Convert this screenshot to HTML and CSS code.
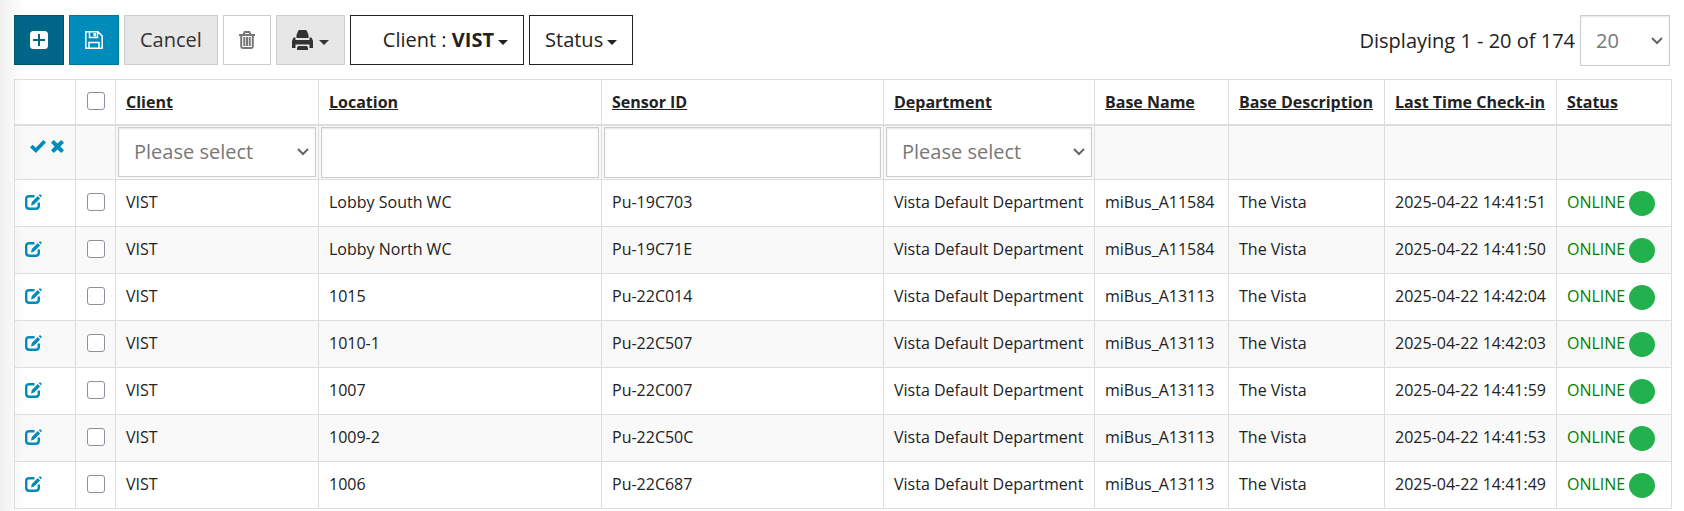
FILE: index.html
```html
<!DOCTYPE html>
<html lang="en">
<head>
<meta charset="utf-8">
<title>Sensors</title>
<link rel="stylesheet" href="styles.css">
</head>
<body>
<svg class="sprite" aria-hidden="true">
  <symbol id="i-plus" viewBox="0 0 18 18"><path fill="currentColor" fill-rule="evenodd" d="M3.500 0h11A3.500 3.500 0 0 1 18 3.500v11a3.500 3.500 0 0 1-3.500 3.500h-11A3.500 3.500 0 0 1 0 14.500v-11A3.500 3.500 0 0 1 3.500 0zM8 3v5H3v2h5v5h2v-5h5V8h-5V3z"/></symbol>
  <symbol id="i-save" viewBox="0 0 18 18"><path fill="none" stroke="currentColor" stroke-width="1.500" d="M.8 .8H13l4.200 4.200v12.200H.8zM4.500 1v5.500h8V1M4 17v-5.500h10V17"/><path fill="currentColor" d="M8.500 2h2.500v3.500H8.500z"/></symbol>
  <symbol id="i-trash" viewBox="0 0 16 18"><path fill="none" stroke="currentColor" stroke-width="2" d="M0 4h16M4.600 3.500l1-2.500h4.800l1 2.500"/><path fill="none" stroke="currentColor" stroke-width="2" d="M2.200 4v11.600q0 1.400 1.400 1.400h8.800q1.400 0 1.400-1.400V4M5.300 6v9M8 6v9M10.700 6v9"/></symbol>
  <symbol id="i-print" viewBox="0 0 22 20"><path fill="currentColor" d="M7.500 0h6q1 0 1.400 1L16.500 5v3h-12V5l1.600-4q.4-1 1.400-1zM1.500 7.500h2V10h14V7.500h2L21 11v7h-3.500v-3.500h-14V18H0v-7zM6 16h9l1 2v2H5v-2z"/></symbol>
  <symbol id="i-check" viewBox="0 0 16 13"><path fill="currentColor" d="M0 7.300L2.600 4.700l3.200 3.100L13.300 0 16 2.600 5.900 13z"/></symbol>
  <symbol id="i-x" viewBox="0 0 13 13"><path fill="currentColor" d="M2.800 0L6.500 3.600 10.200 0 13 2.800 9.400 6.500 13 10.200 10.200 13 6.500 9.400 2.800 13 0 10.200 3.600 6.500 0 2.800z"/></symbol>
  <symbol id="i-edit" viewBox="0 0 17 16"><path fill="none" stroke="currentColor" stroke-width="2.400" d="M9.500 2.200H4.200q-3 0-3 3v6.600q0 3 3 3h6.600q3 0 3-3V8.500"/><path fill="currentColor" d="M6 11.500l.8-3.400 6-6 2.300 2.300-6 6zM13.800 1.200L15 0l2 2-1.200 1.200z"/></symbol>
</svg>
<main class="page">
  <div class="toolbar">
    <div class="actions">
      <button class="btn btn-add" type="button" aria-label="Add"><svg width="18" height="18"><use href="#i-plus"/></svg></button>
      <button class="btn btn-save" type="button" aria-label="Save"><svg width="18" height="18"><use href="#i-save"/></svg></button>
      <button class="btn btn-grey" type="button">Cancel</button>
      <button class="btn btn-trash" type="button" aria-label="Delete"><svg width="16" height="18"><use href="#i-trash"/></svg></button>
      <button class="btn btn-grey btn-print" type="button" aria-label="Print"><svg width="22" height="20"><use href="#i-print"/></svg><span class="caret"></span></button>
      <button class="btn btn-filter btn-client" type="button"><span>Client : <b>VIST</b></span><span class="caret"></span></button>
      <button class="btn btn-filter" type="button"><span>Status</span><span class="caret"></span></button>
    </div>
    <div class="pager">
      <label for="page-size">Displaying 1 - 20 of 174</label>
      <select class="field page-size" id="page-size"><option>20</option></select>
    </div>
  </div>
  <table class="grid">
    <colgroup><col class="c-tools"><col class="c-check"><col class="c-client"><col class="c-location"><col class="c-sensor"><col class="c-dept"><col class="c-base"><col class="c-desc"><col class="c-time"><col class="c-status"></colgroup>
    <thead>
      <tr>
        <th></th><th class="check"><input type="checkbox" aria-label="Select all"></th>
        <th><a href="#">Client</a></th><th><a href="#">Location</a></th><th><a href="#">Sensor ID</a></th><th><a href="#">Department</a></th><th><a href="#">Base Name</a></th><th><a href="#">Base Description</a></th><th><a href="#">Last Time Check-in</a></th><th><a href="#">Status</a></th>
      </tr>
    </thead>
    <tbody id="rows">
      <tr class="filters">
        <td><div class="filter-actions"><a href="#" aria-label="Apply"><svg width="16" height="13"><use href="#i-check"/></svg></a><a href="#" aria-label="Clear"><svg width="13" height="13"><use href="#i-x"/></svg></a></div></td>
        <td></td>
        <td class="cell-field"><select class="field" aria-label="Client"><option>Please select</option></select></td>
        <td class="cell-field"><input class="field" type="text" aria-label="Location"></td>
        <td class="cell-field"><input class="field" type="text" aria-label="Sensor ID"></td>
        <td class="cell-field"><select class="field" aria-label="Department"><option>Please select</option></select></td>
        <td></td><td></td><td></td><td></td>
      </tr>
    </tbody>
  </table>
</main>
<script src="rows.js"></script>
</body>
</html>
```
FILE: styles.css
```css
* { box-sizing: border-box; }
body {
  margin: 0;
  background: linear-gradient(to right, #f0f0f0, #fff 24px);
  color: #222;
  font: 16px/24px "Open Sans", sans-serif;
}
.sprite { display: none; }
.page { padding: 15px 12px 0 14px; overflow: hidden; }
.toolbar { display: flex; justify-content: space-between; height: 64px; padding-right: 2px; }
.actions { display: flex; align-items: flex-start; gap: 5px; }
.btn {
  display: flex; align-items: center; justify-content: center;
  height: 50px; padding: 0 15px;
  border: 1px solid #ccc; background: #fff; color: #333;
  font: 20px/28px "Open Sans", sans-serif;
}
.btn-add { background: #068; border-color: #005270; color: #fff; }
.btn-save { background: #008cba; border-color: #0079a1; color: #fff; }
.btn-grey { background: #e7e7e7; }
.btn-trash { color: #777; }
.btn-print { gap: 5px; }
.btn-filter { border-color: #222; color: #222; gap: 4px; }
.btn-client { padding-left: 32px; }
.caret { border: 5px solid transparent; border-top-color: currentColor; border-bottom: 0; margin-top: 5px; }
.pager { display: flex; align-items: flex-start; gap: 5px; font-size: 20px; line-height: 52px; }
.field {
  display: block; width: 100%; height: 51px; margin: 0; padding: 0 15px;
  border: 1px solid #ccc; border-radius: 0; background-color: #fff;
  box-shadow: inset 0 1px 2px rgba(0, 0, 0, .1);
  color: #777; font: 20px/28px "Open Sans", sans-serif;
}
select.field {
  appearance: none; height: 50px;
  background-image: url("data:image/svg+xml,%3Csvg xmlns='http://www.w3.org/2000/svg' width='12' height='8'%3E%3Cpath d='M1 1l5 5 5-5' fill='none' stroke='%23666' stroke-width='2'/%3E%3C/svg%3E");
  background-repeat: no-repeat; background-position: right 6px center;
}
select.page-size { width: 90px; height: 51px; }
.grid { width: 100%; table-layout: fixed; border-collapse: collapse; }
.c-tools { width: 61px; } .c-check { width: 40px; } .c-client { width: 203px; }
.c-location { width: 283px; } .c-sensor { width: 282px; } .c-dept { width: 211px; }
.c-base { width: 134px; } .c-desc { width: 156px; } .c-time { width: 172px; } .c-status { width: 115px; }
th, td { border: 1px solid #ddd; padding: 0 10px; text-align: left; white-space: nowrap; }
td { height: 47px; padding-bottom: 2px; }
th { height: 45px; border-bottom-width: 2px; font-weight: 700; }
th a { color: #222; }
tbody tr:nth-child(odd) { background: #f9f9f9; }
tbody tr:nth-child(even) { background: #fff; }
tbody tr > :first-child { background: linear-gradient(to right, rgba(0, 0, 0, .02), transparent 12px); }
.check { padding: 0 0 2px; }
.check input { display: block; width: 18px; height: 18px; margin: 0 auto; appearance: none; border: 1px solid #8f8f9d; border-radius: 3px; background: #fff; }
.filters td { height: 54px; }
.filters .cell-field { padding: 1px 2px; vertical-align: top; }
.filter-actions { display: flex; align-items: center; gap: 5px; padding: 0 0 10px 5px; }
.filter-actions svg, .edit svg { display: block; }
.filter-actions a, .edit { color: #008cba; }
.status { display: flex; align-items: center; gap: 4px; color: green; }
.dot { width: 26px; height: 25px; margin-top: 3px; border-radius: 50%; background: #22b14c; }
```
FILE: rows.js
```js
const rows = [
  ["Lobby South WC", "Pu-19C703", "miBus_A11584", "14:41:51"],
  ["Lobby North WC", "Pu-19C71E", "miBus_A11584", "14:41:50"],
  ["1015", "Pu-22C014", "miBus_A13113", "14:42:04"],
  ["1010-1", "Pu-22C507", "miBus_A13113", "14:42:03"],
  ["1007", "Pu-22C007", "miBus_A13113", "14:41:59"],
  ["1009-2", "Pu-22C50C", "miBus_A13113", "14:41:53"],
  ["1006", "Pu-22C687", "miBus_A13113", "14:41:49"]
];
document.getElementById("rows").insertAdjacentHTML("beforeend", rows.map(([loc, id, base, time]) => `
  <tr>
    <td><a class="edit" href="#" aria-label="Edit ${loc}"><svg width="17" height="16"><use href="#i-edit"/></svg></a></td>
    <td class="check"><input type="checkbox" aria-label="Select ${loc}"></td>
    <td>VIST</td><td>${loc}</td><td>${id}</td><td>Vista Default Department</td>
    <td>${base}</td><td>The Vista</td><td>2025-04-22 ${time}</td>
    <td><div class="status">ONLINE<span class="dot"></span></div></td>
  </tr>`).join(""));
```
